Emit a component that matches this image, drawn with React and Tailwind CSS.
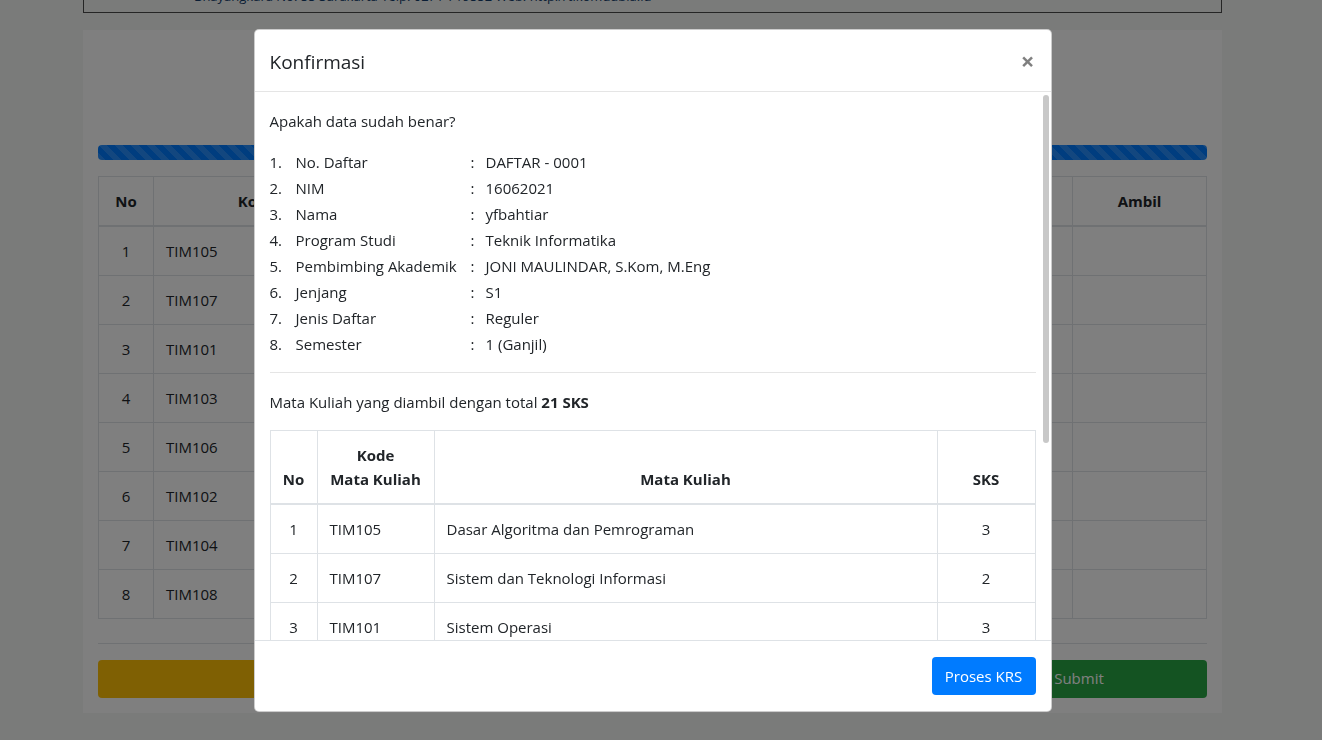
import React from 'react';

const biodata = [
    ['No. Daftar', 'DAFTAR - 0001'],
    ['NIM', '16062021'],
    ['Nama', 'yfbahtiar'],
    ['Program Studi', 'Teknik Informatika'],
    ['Pembimbing Akademik', 'JONI MAULINDAR, S.Kom, M.Eng'],
    ['Jenjang', 'S1'],
    ['Jenis Daftar', 'Reguler'],
    ['Semester', '1 (Ganjil)'],
];

const matkul = [
    ['TIM105', 'Dasar Algoritma dan Pemrograman', 3],
    ['TIM107', 'Sistem dan Teknologi Informasi', 2],
    ['TIM101', 'Sistem Operasi', 3],
    ['TIM103', 'Bahasa Inggris I', 2],
    ['TIM106', 'Pengantar Teknologi Informasi', 3],
    ['TIM102', 'Matematika Dasar', 3],
    ['TIM104', 'Pendidikan Agama', 2],
    ['TIM108', 'Logika Informatika', 3],
];

const PageBehind = () => (
    <div className="w-[1305px]">
        <div className="w-[1139px] mx-auto">
            {/* Kop (sudah ter-scroll ke atas) */}
            <div className="h-[100px] -mt-[87px] border border-[#4a4a4a] flex flex-col justify-end pb-[8px] pl-[110px]">
                <p className="text-[13px] leading-[16px] text-[#143d6b]">
                    Bhayangkara No. 55 Surakarta Telp. 0271-719552 Web: http://tikomdubla.id
                </p>
            </div>

            {/* Card isi KRS */}
            <div className="mt-[17px] bg-white px-[15px] pb-[15px]">
                <div className="h-[115px]" />
                <div className="h-[15px] rounded-[4px] bg-[#007bff] bg-[linear-gradient(45deg,rgba(255,255,255,.15)_25%,transparent_25%,transparent_50%,rgba(255,255,255,.15)_50%,rgba(255,255,255,.15)_75%,transparent_75%,transparent)] bg-size-[16px_16px]" />

                <table className="mt-[16px] w-full table-fixed border-collapse text-[15px] leading-[24px]">
                    <colgroup>
                        <col className="w-[55px]" />
                        <col className="w-[206px]" />
                        <col />
                        <col className="w-[120px]" />
                        <col className="w-[134px]" />
                    </colgroup>
                    <thead>
                        <tr className="h-[49px]">
                            {['No', 'Kode', '', '', 'Ambil'].map((h, i) => (
                                <th key={i} className="border border-[#dee2e6] border-b-2 px-3 py-3 font-bold text-center">{h}</th>
                            ))}
                        </tr>
                    </thead>
                    <tbody>
                        {matkul.map((m, i) => (
                            <tr key={m[0]} className="h-[49px]">
                                <td className="border border-[#dee2e6] px-3 text-center">{i + 1}</td>
                                <td className="border border-[#dee2e6] px-3">{m[0]}</td>
                                <td className="border border-[#dee2e6] px-3"></td>
                                <td className="border border-[#dee2e6] px-3"></td>
                                <td className="border border-[#dee2e6] px-3"></td>
                            </tr>
                        ))}
                    </tbody>
                </table>

                <hr className="mt-[24px] border-t border-[#dee2e6]" />

                <div className="mt-[16px] flex justify-between">
                    <div className="w-[400px] h-[38px] rounded-[4px] bg-[#ffc107]" />
                    <button className="w-[256px] h-[38px] rounded-[4px] bg-[#28a745] text-[15px] text-white">Submit</button>
                </div>
            </div>
        </div>
    </div>
);

const ModalKonfirmasi = () => (
    <div className="fixed inset-0 bg-black/50">
        <div className="w-[1305px] pt-[29px] flex justify-center">
            <div className="w-[798px] bg-white rounded-[5px] border border-black/20 flex flex-col">
                {/* Header */}
                <div className="h-[62px] pl-[15px] pr-4 flex items-center justify-between border-b border-[#e5e5e5]">
                    <h5 className="text-[19px] leading-[30px] text-[#212529] mt-[2px]">Konfirmasi</h5>
                    <span className="text-[24px] leading-none font-bold text-black/50">×</span>
                </div>

                {/* Body */}
                <div className="relative h-[548px] overflow-hidden">
                    <div className="pl-[15px] pr-[15px] pt-[17px] pb-4">
                        <p className="leading-[24px]">Apakah data sudah benar?</p>

                        <table className="mt-4 leading-[24px]">
                            <tbody>
                                {biodata.map((b, i) => (
                                    <tr key={b[0]} className="h-[26px]">
                                        <td className="w-[26px] align-middle">{i + 1}.</td>
                                        <td className="w-[175px] align-middle">{b[0]}</td>
                                        <td className="w-[15px] align-middle">:</td>
                                        <td className="align-middle">{b[1]}</td>
                                    </tr>
                                ))}
                            </tbody>
                        </table>

                        <hr className="mt-[15px] border-t border-[#e5e5e5]" />

                        <p className="mt-[17px] leading-[24px]">
                            Mata Kuliah yang diambil dengan total <b className="font-bold">21 SKS</b>
                        </p>

                        <table className="mt-4 w-full table-fixed border-collapse leading-[24px]">
                            <colgroup>
                                <col className="w-[47px]" />
                                <col className="w-[117px]" />
                                <col />
                                <col className="w-[98px]" />
                            </colgroup>
                            <thead>
                                <tr>
                                    <th className="border border-[#dee2e6] border-b-2 p-3 align-bottom font-bold text-center">No</th>
                                    <th className="border border-[#dee2e6] border-b-2 p-3 align-bottom font-bold text-center">Kode<br />Mata Kuliah</th>
                                    <th className="border border-[#dee2e6] border-b-2 p-3 align-bottom font-bold text-center">Mata Kuliah</th>
                                    <th className="border border-[#dee2e6] border-b-2 p-3 align-bottom font-bold text-center">SKS</th>
                                </tr>
                            </thead>
                            <tbody>
                                {matkul.map((m, i) => (
                                    <tr key={m[0]}>
                                        <td className="border border-[#dee2e6] p-3 text-center">{i + 1}</td>
                                        <td className="border border-[#dee2e6] p-3">{m[0]}</td>
                                        <td className="border border-[#dee2e6] p-3">{m[1]}</td>
                                        <td className="border border-[#dee2e6] p-3 text-center">{m[2]}</td>
                                    </tr>
                                ))}
                            </tbody>
                        </table>
                    </div>
                    {/* scrollbar thumb */}
                    <div className="absolute right-[2px] top-[3px] w-[6px] h-[348px] rounded-full bg-[#c8c8c8]" />
                </div>

                {/* Footer */}
                <div className="h-[71px] border-t border-[#dee2e6] px-[15px] flex items-center justify-end">
                    <button className="h-[38px] w-[104px] rounded-[4px] bg-[#007bff] text-white leading-[24px]">Proses KRS</button>
                </div>
            </div>
        </div>
    </div>
);

export default function App() {
    return (
        <div className="h-[740px] overflow-hidden bg-[#f5f7f5] font-['Open_Sans',sans-serif] text-[15px] text-[#212529]">
            <PageBehind />
            <ModalKonfirmasi />
        </div>
    );
}
